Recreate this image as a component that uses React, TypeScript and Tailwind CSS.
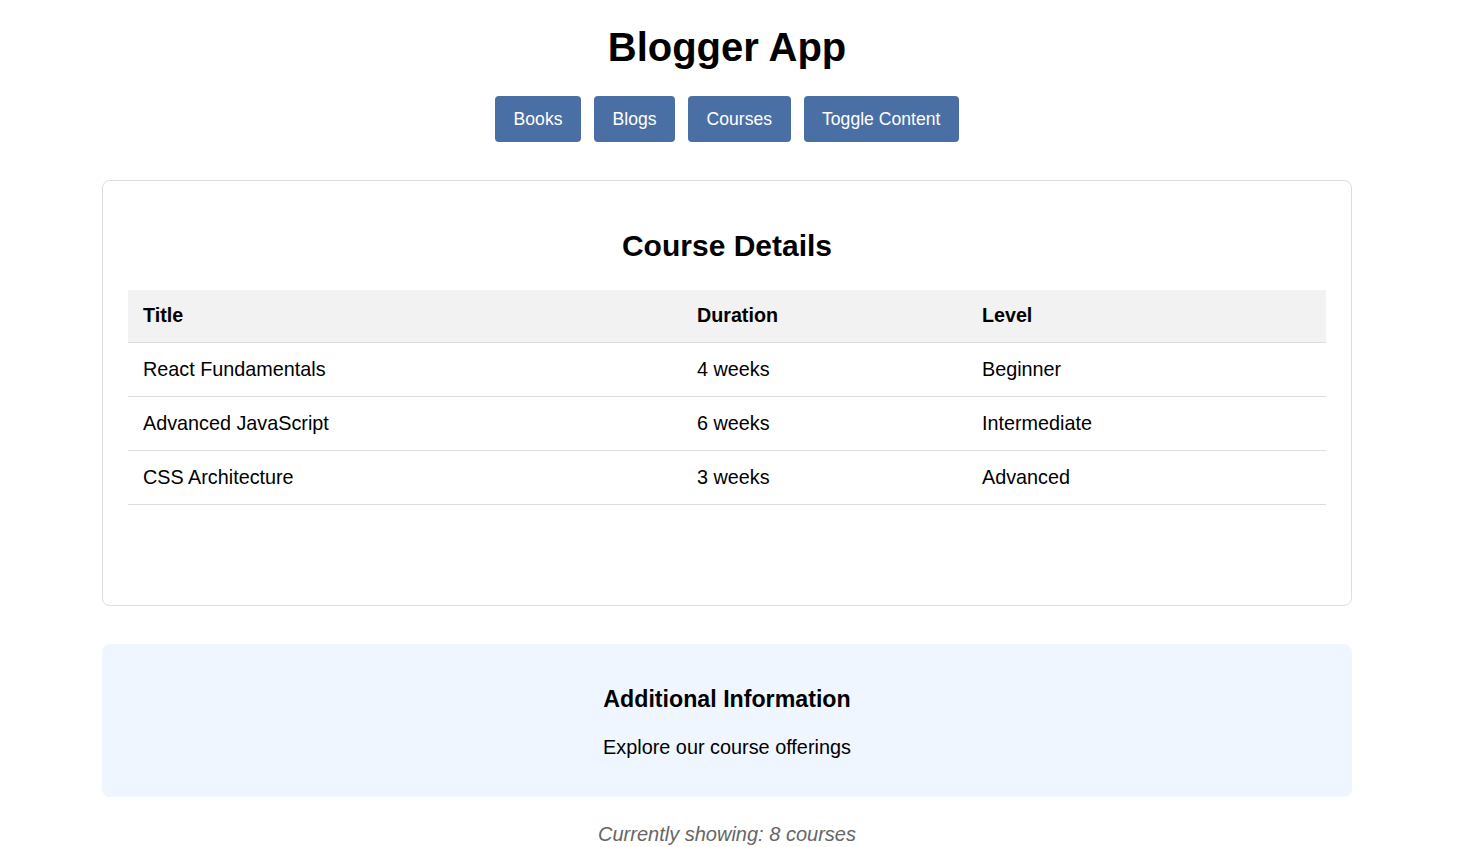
import React from 'react';

const courses = [
  { title: 'React Fundamentals', duration: '4 weeks', level: 'Beginner' },
  { title: 'Advanced JavaScript', duration: '6 weeks', level: 'Intermediate' },
  { title: 'CSS Architecture', duration: '3 weeks', level: 'Advanced' },
];

const tabs = ['Books', 'Blogs', 'Courses', 'Toggle Content'];

export default function App() {
  return (
    <div
      className="min-h-screen bg-white pr-[7px] pt-[24px] text-black"
      style={{ fontFamily: '"Liberation Sans", Arial, sans-serif' }}
    >
      <h1 className="text-center text-[40px] font-bold leading-[46px]">Blogger App</h1>

      <div className="mt-[26px] flex justify-center gap-[13px]">
        {tabs.map((tab) => (
          <button
            key={tab}
            className="h-[46px] rounded-[4px] bg-[#4a6fa5] px-[18.5px] text-[17.6px] text-white"
          >
            {tab}
          </button>
        ))}
      </div>

      <div className="mx-auto mt-[38px] w-[1250px] rounded-[8px] border border-[#dddddd] px-[25px] pb-[100px] pt-[48px]">
        <h2 className="text-center text-[30px] font-bold leading-[34.5px]">Course Details</h2>

        <table className="mt-[26px] w-full border-collapse text-left">
          <thead>
            <tr className="h-[53px] border-b border-[#dddddd] bg-[#f2f2f2]">
              <th className="w-[554px] px-[15px] text-[19.7px] font-bold">Title</th>
              <th className="w-[285px] px-[15px] text-[19.7px] font-bold">Duration</th>
              <th className="px-[15px] text-[19.7px] font-bold">Level</th>
            </tr>
          </thead>
          <tbody>
            {courses.map((course) => (
              <tr key={course.title} className="h-[54px] border-b border-[#dddddd] text-[19.8px]">
                <td className="px-[15px]">{course.title}</td>
                <td className="px-[15px]">{course.duration}</td>
                <td className="px-[15px]">{course.level}</td>
              </tr>
            ))}
          </tbody>
        </table>
      </div>

      <div className="mx-auto mt-[38px] w-[1250px] rounded-[8px] bg-[#eff6ff] pb-[38px] pt-[42px] text-center">
        <h3 className="text-[23.2px] font-bold leading-[26.7px]">Additional Information</h3>
        <p className="mt-[23px] text-[19.85px] leading-[23px]">Explore our course offerings</p>
      </div>

      <p className="mt-[26px] text-center text-[20px] italic leading-[23px] text-[#666666]">
        Currently showing: 8 courses
      </p>
    </div>
  );
}
